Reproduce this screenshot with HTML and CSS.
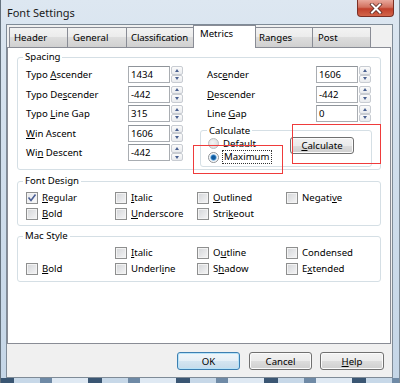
FILE: index.html
```html
<!DOCTYPE html>
<html>

<head>
  <title>Font Settings</title>
  <link rel="stylesheet" href="styles.css">
</head>

<body>
  <div class="window">
    <div class="titlebar">
      <span class="title">Font Settings</span>
      <div class="close">
        <svg width="14" height="11" viewBox="0 0 14 11">
          <path d="M3 1.5 L11 9.5 M11 1.5 L3 9.5" stroke="#5a2a24" stroke-width="3.6" stroke-linecap="square" />
          <path d="M3 1.5 L11 9.5 M11 1.5 L3 9.5" stroke="#ffffff" stroke-width="2" stroke-linecap="square" />
        </svg>
      </div>
    </div>

    <div class="client">
      <div class="tabs">
        <div class="tab tab-header">Header</div>
        <div class="tab tab-general">General</div>
        <div class="tab tab-class">Classification</div>
        <div class="tab tab-metrics selected">Metrics</div>
        <div class="tab tab-ranges">Ranges</div>
        <div class="tab tab-post">Post</div>
      </div>

      <div class="panel">
        <fieldset class="group spacing">
          <legend>Spacing</legend>
          <div class="spacing-body">
            <div class="field-col left-col">
              <span>Typo <u>A</u>scender</span>
              <div class="num">1434</div>
              <div class="spin"><span class="up"></span><span class="down"></span></div>

              <span>Typo De<u>s</u>cender</span>
              <div class="num">-442</div>
              <div class="spin"><span class="up"></span><span class="down"></span></div>

              <span>Typo <u>L</u>ine Gap</span>
              <div class="num">315</div>
              <div class="spin"><span class="up"></span><span class="down"></span></div>

              <span><u>W</u>in Ascent</span>
              <div class="num">1606</div>
              <div class="spin"><span class="up"></span><span class="down"></span></div>

              <span>Wi<u>n</u> Descent</span>
              <div class="num">-442</div>
              <div class="spin"><span class="up"></span><span class="down"></span></div>
            </div>

            <div class="right-col">
              <div class="field-col right-fields">
                <span>Asc<u>e</u>nder</span>
                <div class="num">1606</div>
                <div class="spin"><span class="up"></span><span class="down"></span></div>

                <span><u>D</u>escender</span>
                <div class="num">-442</div>
                <div class="spin"><span class="up"></span><span class="down"></span></div>

                <span>Line <u>G</u>ap</span>
                <div class="num">0</div>
                <div class="spin"><span class="up"></span><span class="down"></span></div>
              </div>

              <fieldset class="group calc">
                <legend>Calculate</legend>
                <div class="calc-body">
                  <div class="radios">
                    <div class="radio-row"><span class="radio off"></span><span>Default</span></div>
                    <div class="radio-row"><span class="radio on"></span><span class="focus">Maximum</span></div>
                  </div>
                  <div class="btn btn-calc"><span><u>C</u>alculate</span></div>
                </div>
              </fieldset>
            </div>
          </div>
        </fieldset>

        <fieldset class="group design">
          <legend>Font Design</legend>
          <div class="checks">
            <div class="check"><span class="box checked">
              <svg width="10" height="10" viewBox="0 0 10 10"><path d="M1.5 4.5 L4 7.5 L8.5 1.5" fill="none" stroke="#4b5f95" stroke-width="1.6" /></svg>
            </span><span><u>R</u>egular</span></div>
            <div class="check"><span class="box"></span><span><u>I</u>talic</span></div>
            <div class="check"><span class="box"></span><span><u>O</u>utlined</span></div>
            <div class="check"><span class="box"></span><span>Negati<u>v</u>e</span></div>
            <div class="check"><span class="box"></span><span><u>B</u>old</span></div>
            <div class="check"><span class="box"></span><span><u>U</u>nderscore</span></div>
            <div class="check"><span class="box"></span><span>Stri<u>k</u>eout</span></div>
          </div>
        </fieldset>

        <fieldset class="group mac">
          <legend>Mac Style</legend>
          <div class="checks">
            <div></div>
            <div class="check"><span class="box"></span><span><u>I</u>talic</span></div>
            <div class="check"><span class="box"></span><span>O<u>u</u>tline</span></div>
            <div class="check"><span class="box"></span><span>Condensed</span></div>
            <div class="check"><span class="box"></span><span><u>B</u>old</span></div>
            <div class="check"><span class="box"></span><span>Underl<u>i</u>ne</span></div>
            <div class="check"><span class="box"></span><span>S<u>h</u>adow</span></div>
            <div class="check"><span class="box"></span><span>E<u>x</u>tended</span></div>
          </div>
        </fieldset>
      </div>

      <div class="buttons">
        <div class="btn btn-ok">OK</div>
        <div class="btn btn-cancel">Cancel</div>
        <div class="btn btn-help"><span><u>H</u>elp</span></div>
      </div>
    </div>

    <!-- red annotation boxes drawn over the dialog -->
    <div class="mark mark-calc"></div>
    <div class="mark mark-max"></div>
  </div>
</body>

</html>
```

FILE: styles.css
```css
body {
  margin: 0;
  overflow: hidden;
  font-family: "Noto Sans", "Segoe UI", sans-serif;
  font-size: 9.6px;
  color: #000;
  background: #fff;
}

u {
  text-decoration-thickness: 1px;
  text-underline-offset: 1px;
}

.window {
  position: relative;
  width: 400px;
  height: 383px;
  display: flex;
  flex-direction: column;
  background:
    repeating-linear-gradient(90deg, #3a5673 0 14px, #c7d8e8 14px 40px, #6f8aa6 40px 52px, #dfe9f3 52px 88px) bottom / 100% 5px no-repeat,
    linear-gradient(#dde7f1, #d3e0ed 30%, #c5d6e7);
  box-shadow: inset 1px 0 #66737f, inset -1px 0 #7c8a97;
}

.titlebar {
  height: 24px;
  flex: none;
  display: flex;
  justify-content: space-between;
  align-items: flex-start;
}

.title {
  padding-left: 7px;
  line-height: 26px;
  font-size: 11px;
  color: #1a1a1a;
}

.close {
  width: 37px;
  height: 17px;
  margin-right: 6px;
  box-sizing: border-box;
  border: 1px solid #7a2f25;
  border-top: none;
  border-radius: 0 0 4px 4px;
  background: linear-gradient(#e9a89c, #d2715f 45%, #c1402c 55%, #d2654a);
  display: flex;
  justify-content: center;
  align-items: center;
}

.client {
  flex: 1;
  margin: 0 7px 5px 6px;
  border: 1px solid #7f8b97;
  background: #f0f0f0;
  display: flex;
  flex-direction: column;
}

/* tab strip */

.tabs {
  height: 22px;
  flex: none;
  display: flex;
  align-items: flex-end;
  padding-left: 2px;
}

.tab {
  height: 20px;
  box-sizing: border-box;
  border: 1px solid #898c95;
  border-bottom: none;
  margin-right: -1px;
  padding-left: 4px;
  line-height: 19px;
  white-space: nowrap;
  overflow: hidden;
  background: linear-gradient(#f3f3f3, #ebebeb 50%, #dddddd 50%, #d0d0d0);
}

.tab.selected {
  height: 23px;
  margin-bottom: -1px;
  padding-left: 6px;
  line-height: 16px;
  background: #fff;
  position: relative;
  z-index: 1;
}

.tab-header { width: 59px; }
.tab-general { width: 60px; padding-left: 5px; }
.tab-class { width: 68px; padding-left: 4px; letter-spacing: -0.15px; }
.tab-metrics { width: 63px; }
.tab-ranges { width: 58px; padding-left: 3px; }
.tab-post { width: 59px; padding-left: 5px; }

.panel {
  height: 297px;
  flex: none;
  box-sizing: border-box;
  margin-right: 1px;
  border: 1px solid #898c95;
  background: #fff;
  padding: 3px 9px 0 9px;
  display: flex;
  flex-direction: column;
}

/* group boxes */

.group {
  margin: 0;
  border: 1px solid #d5dfe5;
  border-radius: 3px;
  padding: 0 8px;
  box-sizing: border-box;
  min-width: 0;
}

.group legend {
  padding: 0 2px;
  margin-left: -3px;
  line-height: 12px;
}

.spacing {
  height: 119px;
}

.spacing-body {
  display: flex;
  padding-top: 3px;
}

.field-col {
  display: grid;
  grid-auto-rows: 17px;
  row-gap: 2.6px;
  align-items: center;
}

.left-col {
  width: 181px;
  grid-template-columns: 102px 42px 13px;
}

.right-fields {
  grid-template-columns: 109px 42px 13px;
}

.num {
  height: 17px;
  box-sizing: border-box;
  border: 1px solid #a9adb2;
  border-top-color: #8f949a;
  padding-left: 2px;
  line-height: 15px;
  background: #fff;
}

.spin {
  height: 17px;
  margin-left: 1px;
  display: flex;
  flex-direction: column;
}

.spin span {
  flex: 1;
  box-sizing: border-box;
  border: 1px solid #c8ccd2;
  border-radius: 2px;
  background: linear-gradient(#fbfbfb, #e9ebee);
  display: flex;
  justify-content: center;
  align-items: center;
}

.spin .up::before,
.spin .down::before {
  content: "";
  border-left: 2.5px solid transparent;
  border-right: 2.5px solid transparent;
}

.spin .up::before {
  border-bottom: 3px solid #4a6090;
}

.spin .down::before {
  border-top: 3px solid #4a6090;
}

.calc {
  width: 172px;
  height: 42px;
  margin: 3px 0 0 -7px;
}

.calc legend {
  margin-left: -2px;
  line-height: 11px;
}

.calc-body {
  display: flex;
  padding-top: 1px;
}

.radios {
  display: flex;
  flex-direction: column;
  gap: 2px;
  margin-left: -1px;
}

.radio-row {
  height: 12px;
  display: flex;
  align-items: center;
  gap: 4px;
}

.radio {
  width: 11px;
  height: 11px;
  box-sizing: border-box;
  border-radius: 50%;
  border: 1px solid #8e9297;
  background: radial-gradient(circle at 40% 40%, #ffffff, #dadcdf);
}

.radio.off {
  border-color: #b9bcc0;
  background: radial-gradient(circle at 40% 40%, #f4f4f4, #d6d6d6);
}

.radio.on {
  background: radial-gradient(circle, #0f5a9e 0 1.8px, #4f9ad6 2.6px, #dfeaf5 3.4px, #ffffff 4.2px);
}

.focus {
  outline: 1px dotted #333;
  outline-offset: 0;
  padding: 0 1px;
  line-height: 12px;
}

/* buttons */

.btn {
  height: 18px;
  box-sizing: border-box;
  border: 1px solid #707070;
  border-radius: 3px;
  background: linear-gradient(#f2f2f2, #ebebeb 50%, #dddddd 50%, #cfcfcf);
  box-shadow: inset 0 0 0 1px #fbfbfb;
  display: flex;
  justify-content: center;
  align-items: center;
}

.btn-calc {
  width: 64px;
  height: 17px;
  margin: 0 9px 0 auto;
}

.buttons {
  flex: 1;
  display: flex;
  justify-content: flex-end;
  align-items: flex-start;
  padding: 8px 8px 0 0;
}

.btn-ok {
  width: 63px;
  margin-right: 9px;
  border-color: #3c7fb1;
  box-shadow: inset 0 0 0 1px #b7e3f9;
  background: linear-gradient(#f0f6fa, #e5eff6 50%, #d4e5f1 50%, #c6dbea);
}

.btn-cancel {
  width: 63px;
  margin-right: 8px;
}

.btn-help {
  width: 64px;
}

/* check boxes */

.design {
  height: 51px;
  margin-top: 5px;
}

.mac {
  height: 52px;
  margin-top: 4px;
}

.checks {
  display: grid;
  grid-template-columns: 89px 82px 89px 1fr;
  grid-auto-rows: 13px;
  row-gap: 3px;
  padding-top: 4px;
}

.check {
  display: flex;
  align-items: center;
  gap: 4px;
}

.box {
  width: 12px;
  height: 12px;
  box-sizing: border-box;
  border: 1px solid #8e8f8f;
  background: linear-gradient(135deg, #d3d5d8, #f5f5f6);
  box-shadow: inset 0 0 0 1px #f3f3f3;
  display: flex;
  justify-content: center;
  align-items: center;
}

.box.checked {
  background: linear-gradient(135deg, #e4e6ea, #fafafa);
}

/* red annotation rectangles */

.mark {
  position: absolute;
  box-sizing: border-box;
  border: 1px solid #ef3b3b;
}

.mark-calc {
  left: 292px;
  top: 124px;
  width: 89px;
  height: 40px;
}

.mark-max {
  left: 193px;
  top: 145px;
  width: 90px;
  height: 29px;
}
```
